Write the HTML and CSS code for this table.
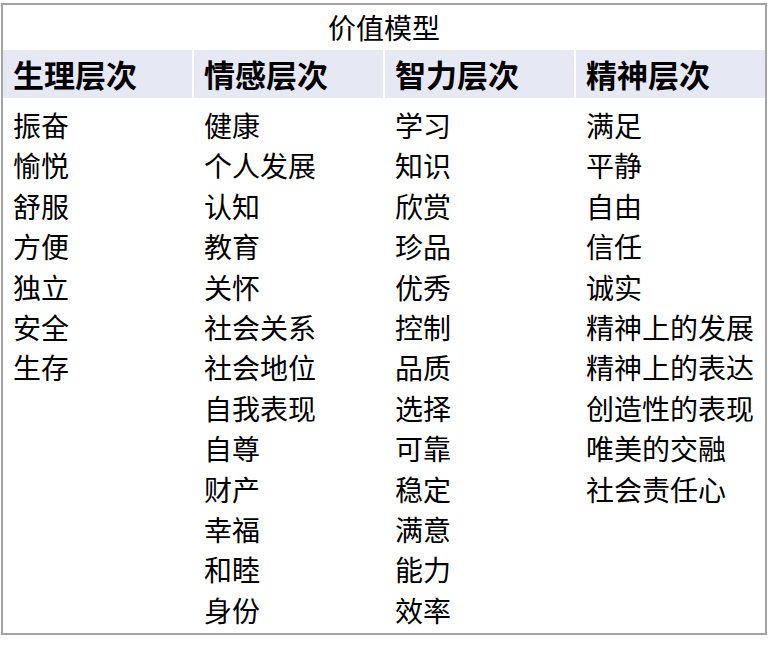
FILE: index.html
```html
<!DOCTYPE html>
<html lang="zh">
<head>
<meta charset="utf-8">
<title>价值模型</title>
<link rel="stylesheet" href="styles.css">
</head>
<body>
<div class="frame">
  <div class="caption">价值模型</div>
  <div class="grid head">
    <div class="hcell">生理层次</div>
    <div class="hcell">情感层次</div>
    <div class="hcell">智力层次</div>
    <div class="hcell">精神层次</div>
  </div>
  <div class="grid body">
    <ul class="col">
      <li>振奋</li><li>愉悦</li><li>舒服</li><li>方便</li><li>独立</li><li>安全</li><li>生存</li>
    </ul>
    <ul class="col">
      <li>健康</li><li>个人发展</li><li>认知</li><li>教育</li><li>关怀</li><li>社会关系</li><li>社会地位</li><li>自我表现</li><li>自尊</li><li>财产</li><li>幸福</li><li>和睦</li><li>身份</li>
    </ul>
    <ul class="col">
      <li>学习</li><li>知识</li><li>欣赏</li><li>珍品</li><li>优秀</li><li>控制</li><li>品质</li><li>选择</li><li>可靠</li><li>稳定</li><li>满意</li><li>能力</li><li>效率</li>
    </ul>
    <ul class="col">
      <li>满足</li><li>平静</li><li>自由</li><li>信任</li><li>诚实</li><li>精神上的发展</li><li>精神上的表达</li><li>创造性的表现</li><li>唯美的交融</li><li>社会责任心</li>
    </ul>
  </div>
</div>
</body>
</html>
```

FILE: styles.css
```css
* { box-sizing: border-box; }
html, body {
  margin: 0;
  padding: 0;
  background: #ffffff;
}
body {
  font-family: "PingFang SC", "Noto Sans CJK SC", "Noto Sans", sans-serif;
  color: #000000;
}
.frame {
  width: 766px;
  margin: 3px 0 0 1px;
  border: 2px solid #a3a3a3;
  height: 632px;
}
.caption {
  height: 45px;
  text-align: center;
  font-size: 28px;
  line-height: 44px;
}
.grid {
  display: grid;
  grid-template-columns: repeat(4, 1fr);
  column-gap: 2px;
}
.head {
  height: 48px;
}
.hcell {
  background: #e6e8f3;
  font-size: 31px;
  font-weight: 700;
  line-height: 48px;
  padding-left: 10px;
}
.body {
  padding-top: 7px;
}
.col {
  list-style: none;
  margin: 0;
  padding: 0 0 0 10px;
  font-size: 28px;
  line-height: 40.4px;
}
.col li {
  white-space: nowrap;
}
```
